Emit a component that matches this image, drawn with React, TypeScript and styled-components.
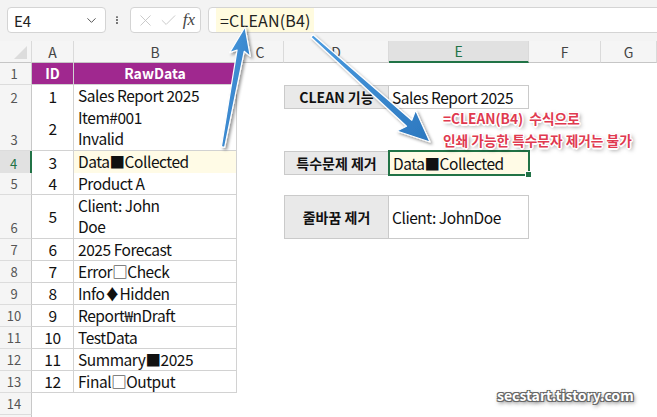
import React from 'react';
import styled, { createGlobalStyle, css } from 'styled-components';
import { ChevronDown, EllipsisVertical, X, Check } from 'lucide-react';

const FONT = `"Noto Sans CJK KR", "Noto Sans", sans-serif`;
const GREEN = '#217346';
const COLS = '32px 42px 163px 47px 105px 140px 72px 1fr';

const GlobalStyle = createGlobalStyle`
  html, body { margin: 0; padding: 0; background: #fff; }
  body { font-family: ${FONT}; overflow: hidden; }
`;

const Page = styled.div`
  position: relative;
  width: 657px;
  height: 417px;
  overflow: hidden;
  background: #fff;
`;

const Toolbar = styled.div`
  display: flex;
  align-items: flex-start;
  gap: 7px;
  height: 41px;
  box-sizing: border-box;
  padding: 7px 0 0 7px;
  background: #f3f3f3;
`;

const Box = styled.div`
  height: 26px;
  box-sizing: border-box;
  background: #fff;
  border: 1px solid #d4d4d4;
  border-radius: 4px;
  display: flex;
  align-items: center;
`;

const NameBox = styled(Box)`
  width: 99px;
  padding: 0 6px 0 6px;
  justify-content: space-between;
  font-size: 15px;
  color: #222;
`;

const Dots = styled.div`
  width: 10px;
  height: 26px;
  display: flex;
  align-items: center;
  justify-content: center;
  color: #444;
  margin: 0 1px 0 -1px;
`;

const FuncBox = styled(Box)`
  width: 71px;
  padding: 0 3px 0 5px;
  gap: 4px;
  color: #c3c3c3;
`;

const Fx = styled.span`
  margin-left: auto;
  font-family: "Liberation Serif", serif;
  font-style: italic;
  font-size: 17px;
  color: #444;
  padding-right: 2px;
`;

const FormulaBox = styled(Box)`
  flex: 1;
  margin-right: -10px;
  padding-left: 7px;
  align-items: stretch;
`;

const FormulaText = styled.span`
  display: flex;
  align-items: center;
  width: 98px;
  box-sizing: border-box;
  padding-left: 4px;
  background: #fffbdf;
  font-size: 16px;
  color: #222;
  letter-spacing: 0.2px;
`;

const Sheet = styled.div`
  display: flex;
  flex-direction: column;
`;

const Row = styled.div<{ $h: number }>`
  display: grid;
  grid-template-columns: ${COLS};
  height: ${p => p.$h}px;
`;

const ColHeaderRow = styled(Row)`
  background: #f5f5f5;
`;

const ColHead = styled.div<{ $sel?: boolean }>`
  box-sizing: border-box;
  display: flex;
  align-items: center;
  justify-content: center;
  font-size: 14px;
  color: #444;
  border-right: 1px solid #dadada;
  border-bottom: 1px solid #c6c6c6;
  ${p => p.$sel && css`
    background: #e1e1e1;
    color: ${GREEN};
    border-bottom: 2px solid ${GREEN};
  `}
`;

const Corner = styled(ColHead)`
  position: relative;
  &::after {
    content: '';
    position: absolute;
    right: 4px;
    bottom: 3px;
    border-left: 13px solid transparent;
    border-bottom: 13px solid #dcdcdc;
  }
`;

const RowHead = styled.div<{ $sel?: boolean }>`
  box-sizing: border-box;
  display: flex;
  align-items: flex-end;
  justify-content: center;
  padding-right: 3px;
  line-height: 21px;
  font-size: 13px;
  color: #555;
  background: #f5f5f5;
  border-right: 1px solid #c8c8c8;
  border-bottom: 1px solid #dcdcdc;
  ${p => p.$sel && css`
    background: #e1e1e1;
    color: ${GREEN};
    border-right: 2px solid ${GREEN};
  `}
`;

const Cell = styled.div<{ $head?: boolean; $center?: boolean; $fill?: string }>`
  box-sizing: border-box;
  display: flex;
  align-items: ${p => (p.$center ? 'center' : 'flex-start')};
  justify-content: ${p => (p.$center ? 'center' : 'flex-start')};
  padding-left: ${p => (p.$center ? 0 : 4)}px;
  white-space: pre-line;
  line-height: 21px;
  font-size: 15.5px;
  letter-spacing: -0.45px;
  color: #111;
  background: ${p => p.$fill || '#fff'};
  border-right: 1px solid #d2d2d2;
  border-bottom: 1px solid #d2d2d2;
  ${p => p.$head && css`
    background: #a0288f;
    color: #fff;
    font-weight: 700;
    font-size: 14px;
    letter-spacing: 0;
    align-items: center;
    justify-content: center;
    padding-left: 0;
  `}
`;

const Empty = styled.div``;

const Label = styled.div`
  box-sizing: border-box;
  display: flex;
  align-items: center;
  justify-content: center;
  background: #e9e9e9;
  border: 1px solid #cacaca;
  font-size: 14px;
  font-weight: 700;
  color: #111;
`;

const Value = styled.div<{ $sel?: boolean }>`
  position: relative;
  box-sizing: border-box;
  display: flex;
  align-items: center;
  padding-left: 3px;
  font-size: 15.5px;
  letter-spacing: -0.45px;
  color: #111;
  background: #fff;
  border: 1px solid #cacaca;
  border-left: none;
  ${p => p.$sel && css`
    background: #fffbe6;
    border: 2px solid ${GREEN};
    margin: -1px -1px -1px -1px;
    padding-left: 3px;
    &::after {
      content: '';
      position: absolute;
      right: -4px;
      bottom: -4px;
      width: 5px;
      height: 5px;
      background: ${GREEN};
      border: 1px solid #fff;
    }
  `}
`;

const Overlay = styled.svg`
  position: absolute;
  left: 0;
  top: 0;
  pointer-events: none;
`;

const Note = styled.div`
  position: absolute;
  left: 443px;
  top: 107px;
  font-size: 13.7px;
  font-weight: 700;
  line-height: 22px;
  color: #e0394f;
  white-space: pre;
  text-shadow:
    -1px -1px 0 #fff, 1px -1px 0 #fff, -1px 1px 0 #fff, 1px 1px 0 #fff,
    0 -1.5px 0 #fff, 0 1.5px 0 #fff, -1.5px 0 0 #fff, 1.5px 0 0 #fff,
    2px 2px 4px rgba(0, 0, 0, 0.6);
`;

const Watermark = styled.div`
  position: absolute;
  left: 497px;
  top: 385px;
  font-size: 14px;
  font-weight: 700;
  color: #fff;
  text-shadow:
    -1px -1px 0 #666, 1px -1px 0 #666, -1px 1px 0 #666, 1px 1px 0 #666,
    1px 2px 4px rgba(0, 0, 0, 0.7);
`;

type DataRow = {
  n: number;
  h: number;
  id?: string;
  raw?: string;
  label?: string;
  value?: string;
  rawFill?: string;
  sel?: boolean;
};

const rows: DataRow[] = [
  { n: 2, h: 22, id: '1', raw: 'Sales Report 2025', label: 'CLEAN 기능', value: 'Sales Report 2025' },
  { n: 3, h: 44, id: '2', raw: 'Item#001\nInvalid' },
  { n: 4, h: 22, id: '3', raw: 'Data■Collected', rawFill: '#fffbe6', label: '특수문제 제거', value: 'Data■Collected', sel: true },
  { n: 5, h: 22, id: '4', raw: 'Product A' },
  { n: 6, h: 44, id: '5', raw: 'Client: John\nDoe', label: '줄바꿈 제거', value: 'Client: JohnDoe' },
  { n: 7, h: 22, id: '6', raw: '2025 Forecast' },
  { n: 8, h: 22, id: '7', raw: 'Error□Check' },
  { n: 9, h: 22, id: '8', raw: 'Info♦Hidden' },
  { n: 10, h: 22, id: '9', raw: 'Report₩nDraft' },
  { n: 11, h: 22, id: '10', raw: 'TestData' },
  { n: 12, h: 22, id: '11', raw: 'Summary■2025' },
  { n: 13, h: 22, id: '12', raw: 'Final□Output' },
  { n: 14, h: 22 },
];

function arrowPoints(x1: number, y1: number, x2: number, y2: number, tw: number, nw: number, hl: number, hw: number) {
  const dx = x2 - x1;
  const dy = y2 - y1;
  const len = Math.hypot(dx, dy);
  const ux = dx / len;
  const uy = dy / len;
  const nx = -uy;
  const ny = ux;
  const bx = x2 - ux * hl;
  const by = y2 - uy * hl;
  const wx = bx - ux * 4;
  const wy = by - uy * 4;
  const pts = [
    [x1 + nx * tw, y1 + ny * tw],
    [bx + nx * nw, by + ny * nw],
    [wx + nx * hw, wy + ny * hw],
    [x2, y2],
    [wx - nx * hw, wy - ny * hw],
    [bx - nx * nw, by - ny * nw],
    [x1 - nx * tw, y1 - ny * tw],
  ];
  return pts.map(p => `${p[0].toFixed(1)},${p[1].toFixed(1)}`).join(' ');
}

const Arrows: React.FC = () => (
  <Overlay width={657} height={417} viewBox="0 0 657 417">
    <defs>
      <linearGradient id="blue" x1="0" y1="0" x2="1" y2="1">
        <stop offset="0" stopColor="#4b9be0" />
        <stop offset="1" stopColor="#2c78bf" />
      </linearGradient>
      <filter id="shadow" x="-20%" y="-20%" width="140%" height="140%">
        <feDropShadow dx="2" dy="2" stdDeviation="1.6" floodColor="#000" floodOpacity="0.4" />
      </filter>
    </defs>
    <g filter="url(#shadow)" fill="url(#blue)" stroke="#fff" strokeWidth="1.2" strokeLinejoin="round">
      <polygon points={arrowPoints(223, 147, 245, 27, 1.6, 3.6, 24, 10.5)} />
      <polygon points={arrowPoints(312, 36, 430, 142, 1.6, 4, 28, 14)} />
    </g>
  </Overlay>
);

const App: React.FC = () => {
  return (
    <Page>
      <GlobalStyle />
      <Toolbar>
        <NameBox>
          <span>E4</span>
          <ChevronDown size={15} color="#555" strokeWidth={1.6} />
        </NameBox>
        <Dots>
          <EllipsisVertical size={16} strokeWidth={2.6} />
        </Dots>
        <FuncBox>
          <X size={19} strokeWidth={1.1} />
          <Check size={19} strokeWidth={1.1} />
          <Fx>fx</Fx>
        </FuncBox>
        <FormulaBox>
          <FormulaText>=CLEAN(B4)</FormulaText>
        </FormulaBox>
      </Toolbar>

      <Sheet>
        <ColHeaderRow $h={22}>
          <Corner />
          <ColHead>A</ColHead>
          <ColHead>B</ColHead>
          <ColHead>C</ColHead>
          <ColHead>D</ColHead>
          <ColHead $sel>E</ColHead>
          <ColHead>F</ColHead>
          <ColHead>G</ColHead>
        </ColHeaderRow>

        <Row $h={22}>
          <RowHead>1</RowHead>
          <Cell $head>ID</Cell>
          <Cell $head>RawData</Cell>
        </Row>

        {rows.map(r => (
          <Row key={r.n} $h={r.h}>
            <RowHead $sel={r.sel}>{r.n}</RowHead>
            {r.id ? (
              <>
                <Cell $center>{r.id}</Cell>
                <Cell $fill={r.rawFill}>{r.raw}</Cell>
              </>
            ) : (
              <>
                <Empty />
                <Empty />
              </>
            )}
            <Empty />
            {r.label ? <Label>{r.label}</Label> : <Empty />}
            {r.value ? <Value $sel={r.sel}>{r.value}</Value> : <Empty />}
          </Row>
        ))}

        <Row $h={10}>
          <RowHead />
        </Row>
      </Sheet>

      <Arrows />
      <Note>{'=CLEAN(B4)  수식으로\n인쇄 가능한 특수문자 제거는 불가'}</Note>
      <Watermark>secstart.tistory.com</Watermark>
    </Page>
  );
};

export default App;
